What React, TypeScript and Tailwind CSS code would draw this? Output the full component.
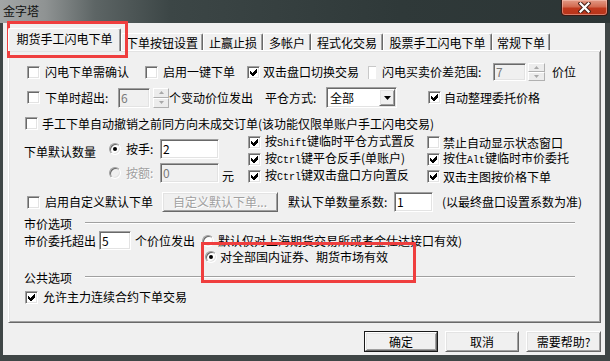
import React from "react";

const T = ({ children, className = "" }: { children: React.ReactNode; className?: string }) => (
  <span className={`whitespace-nowrap text-[12px] leading-[14px] ${className}`}>{children}</span>
);

const M = ({ children }: { children: React.ReactNode }) => (
  <span className="font-['Liberation_Mono',monospace] text-[10px]">{children}</span>
);

const sunken =
  "border border-t-[#a0a0a0] border-l-[#a0a0a0] border-r-white border-b-white shadow-[inset_1px_1px_0_#696969,inset_-1px_-1px_0_#e3e3e3]";
const raised =
  "border border-t-white border-l-white border-r-[#696969] border-b-[#696969] shadow-[inset_1px_1px_0_#e3e3e3,inset_-1px_-1px_0_#a0a0a0]";

const Cb = ({ checked = false }: { checked?: boolean }) => (
  <div className={`relative w-[13px] h-[13px] shrink-0 bg-white ${sunken}`}>
    {checked && (
      <svg className="absolute left-[2px] top-[2px]" width="7" height="7" viewBox="0 0 7 7" shapeRendering="crispEdges">
        <polygon points="0,2 2,4 6,0 7,0 7,3 3,7 2,7 0,5" fill="#000" />
      </svg>
    )}
  </div>
);

const Radio = ({ checked = false, disabled = false }: { checked?: boolean; disabled?: boolean }) => (
  <div
    className={`w-[12px] h-[12px] shrink-0 rounded-full flex items-center justify-center ${sunken} ${
      disabled ? "bg-[#f0f0f0]" : "bg-white"
    }`}
  >
    {checked && <div className="w-[4px] h-[4px] rounded-full bg-black" />}
  </div>
);

const Box = ({
  cls,
  children,
  disabled = false,
}: {
  cls: string;
  children?: React.ReactNode;
  disabled?: boolean;
}) => (
  <div
    className={`flex items-center pl-[2px] shrink-0 ${sunken} ${
      disabled ? "bg-[#f0f0f0] text-[#7a7a7a]" : "bg-white text-black"
    } ${cls}`}
  >
    <span className="text-[12px] leading-[14px]">{children}</span>
  </div>
);

const Spin = ({ cls }: { cls: string }) => (
  <div className={`flex flex-col shrink-0 ${cls}`}>
    <div className="flex-1 flex items-center justify-center bg-[#ececec] border border-t-white border-l-white border-r-[#b0b0b0] border-b-[#b0b0b0]">
      <svg width="5" height="3" viewBox="0 0 5 3">
        <polygon points="2.5,0 5,3 0,3" fill="#a8a8a8" />
      </svg>
    </div>
    <div className="flex-1 flex items-center justify-center bg-[#ececec] border border-t-white border-l-white border-r-[#b0b0b0] border-b-[#b0b0b0]">
      <svg width="5" height="3" viewBox="0 0 5 3">
        <polygon points="0,0 5,0 2.5,3" fill="#a8a8a8" />
      </svg>
    </div>
  </div>
);

const Tab = ({ label, cls, active = false }: { label: string; cls: string; active?: boolean }) => (
  <div
    className={`flex justify-center shrink-0 bg-[#f0f0f0] rounded-t-[2px] border-t border-l border-t-white border-l-white border-r border-r-[#696969] shadow-[inset_-1px_0_0_#a0a0a0] ${
      active ? "relative z-10 h-[23px] -mb-[1px] pt-[3px] items-start" : "h-[17px] items-center pt-[1px]"
    } ${cls}`}
  >
    <T className="text-black">{label}</T>
  </div>
);

const GroupLabel = ({ label, cls }: { label: string; cls: string }) => (
  <div className={`flex items-center h-[14px] pl-[15px] ${cls}`}>
    <T className="text-black">{label}</T>
    <div className="ml-[13px] w-[490px] h-[2px] mb-[3px] border-t border-t-[#a0a0a0] border-b border-b-white" />
  </div>
);

export default function App() {
  return (
    <div className="relative w-[610px] h-[361px] overflow-hidden bg-[#3f4646] font-['Noto_Sans_CJK_SC','Noto_Sans',sans-serif] flex flex-col text-black">
      {/* title bar */}
      <div className="h-[23px] shrink-0 flex items-start bg-[linear-gradient(90deg,#a3a6a6_0px,#8f9393_45px,#5d6565_95px,#3c4646_170px,#2f3939_400px,#2c3535_610px)]">
        <span className="ml-[3px] mt-[4px] text-[12px] leading-[14px] text-[#111]">金字塔</span>
        <div className="ml-auto mr-[2px] w-[47px] h-[16px] rounded-b-[4px] border border-t-0 border-[#3a1a14] bg-[linear-gradient(180deg,#e29a86_0%,#d26a50_45%,#c0391e_55%,#b8341a_100%)] shadow-[inset_0_0_0_1px_rgba(255,210,200,0.45)] flex items-center justify-center">
          <svg width="13" height="11" viewBox="0 0 13 11">
            <path d="M2.5 1.5 L10.5 9.5 M10.5 1.5 L2.5 9.5" stroke="#4a2018" strokeWidth="4.2" strokeLinecap="square" />
            <path d="M2.5 1.5 L10.5 9.5 M10.5 1.5 L2.5 9.5" stroke="#ffffff" strokeWidth="2.2" strokeLinecap="square" />
          </svg>
        </div>
      </div>

      {/* body */}
      <div className="ml-[3px] mr-[5px] h-[332px] bg-[#f0f0f0] flex flex-col pl-[5px] pt-[5px]">
        {/* tabs */}
        <div className="h-[22px] flex items-end">
          <Tab label="期货手工闪电下单" cls="w-[113px]" active />
          <Tab label="下单按钮设置" cls="w-[82px]" />
          <Tab label="止赢止损" cls="w-[60px]" />
          <Tab label="多帐户" cls="w-[48px]" />
          <Tab label="程式化交易" cls="w-[72px]" />
          <Tab label="股票手工闪电下单" cls="w-[109px]" />
          <Tab label="常规下单" cls="w-[58px]" />
        </div>

        {/* panel */}
        <div className={`w-[593px] h-[273px] bg-[#f0f0f0] flex flex-col ${raised}`}>
          {/* row 1 */}
          <div className="mt-[12px] h-[18px] flex items-center">
            <div className="pl-[18px] w-[136px] flex items-center gap-[5px]">
              <Cb />
              <T>闪电下单需确认</T>
            </div>
            <div className="w-[102px] flex items-center gap-[5px]">
              <Cb />
              <T>启用一键下单</T>
            </div>
            <div className="w-[121px] flex items-center gap-[3px]">
              <Cb checked />
              <T>双击盘口切换交易</T>
            </div>
            <div className="w-[8px] h-[13px] shrink-0 bg-white border-t border-l border-t-[#c8c8c8] border-l-[#c8c8c8]" />
            <div className="ml-[6px] w-[111px] flex">
              <T>闪电买卖价差范围:</T>
            </div>
            <Box cls="w-[33px] h-[18px]" disabled>
              7
            </Box>
            <Spin cls="ml-[2px] w-[17px] h-[18px]" />
            <T className="ml-[7px]">价位</T>
          </div>

          {/* row 2 */}
          <div className="mt-[6px] h-[21px] flex items-center">
            <div className="pl-[18px] flex items-center gap-[5px]">
              <Cb />
              <div className="w-[73px] flex">
                <T>下单时超出:</T>
              </div>
            </div>
            <Box cls="w-[32px] h-[20px]" disabled>
              6
            </Box>
            <Spin cls="ml-[3px] w-[16px] h-[20px]" />
            <div className="w-[96px] flex">
              <T>个变动价位发出</T>
            </div>
            <div className="w-[61px] flex">
              <T>平仓方式:</T>
            </div>
            <div className={`w-[71px] h-[21px] shrink-0 bg-white flex items-center ${sunken}`}>
              <T className="pl-[3px]">全部</T>
              <div className={`ml-auto mr-[1px] w-[16px] h-[17px] bg-[#f0f0f0] flex items-center justify-center ${raised}`}>
                <svg width="7" height="4" viewBox="0 0 7 4">
                  <polygon points="0,0 7,0 3.5,4" fill="#000" />
                </svg>
              </div>
            </div>
            <div className="ml-[31px] flex items-center gap-[3px]">
              <Cb checked />
              <T>自动整理委托价格</T>
            </div>
          </div>

          {/* row 3 */}
          <div className="mt-[9px] h-[13px] flex items-center pl-[16px] gap-[4px]">
            <Cb />
            <T>手工下单自动撤销之前同方向未成交订单(该功能仅限单账户手工闪电交易)</T>
          </div>

          {/* block */}
          <div className="mt-[4px] h-[51px] flex">
            <div className="w-[239px] pl-[15px] flex">
              <div className="w-[85px] pt-[4px]">
                <T>下单默认数量</T>
              </div>
              <div className="flex flex-col">
                <div className="mt-[5px] h-[20px] flex items-center">
                  <Radio checked />
                  <div className="ml-[5px] w-[34px] flex">
                    <T>按手:</T>
                  </div>
                  <Box cls="w-[59px] h-[20px]">2</Box>
                </div>
                <div className="mt-[4px] h-[20px] flex items-center">
                  <Radio disabled />
                  <div className="ml-[5px] w-[34px] flex">
                    <T className="text-[#a0a0a0] [text-shadow:1px_1px_0_#fff]">按额:</T>
                  </div>
                  <Box cls="w-[59px] h-[20px]" disabled>
                    0
                  </Box>
                  <T className="ml-[3px] mt-[6px]">元</T>
                </div>
              </div>
            </div>
            <div className="grid grid-cols-[179px_auto] grid-rows-[17px_17px_17px]">
              <div className="flex items-center gap-[4px]">
                <Cb checked />
                <T>
                  按<M>Shift</M>键临时平仓方式置反
                </T>
              </div>
              <div className="flex items-center gap-[3px]">
                <Cb />
                <T>禁止自动显示状态窗口</T>
              </div>
              <div className="flex items-center gap-[4px]">
                <Cb checked />
                <T>
                  按<M>Ctrl</M>键平仓反手(单账户)
                </T>
              </div>
              <div className="flex items-center gap-[3px]">
                <Cb checked />
                <T>
                  按住<M>Alt</M>键临时市价委托
                </T>
              </div>
              <div className="flex items-center gap-[4px]">
                <Cb checked />
                <T>
                  按<M>Ctrl</M>键双击盘口方向置反
                </T>
              </div>
              <div className="flex items-center gap-[3px]">
                <Cb checked />
                <T>双击主图按价格下单</T>
              </div>
            </div>
          </div>

          {/* row 7 */}
          <div className="mt-[7px] h-[20px] flex items-center">
            <div className="pl-[18px] flex items-center gap-[5px]">
              <Cb />
              <div className="w-[117px] flex">
                <T>启用自定义默认下单</T>
              </div>
            </div>
            <div className={`w-[116px] h-[20px] shrink-0 bg-[#f0f0f0] flex items-center justify-center ${raised}`}>
              <T className="text-[#a0a0a0] [text-shadow:1px_1px_0_#fff]">自定义默认下单...</T>
            </div>
            <div className="ml-[10px] w-[106px] flex">
              <T>默认下单数量系数:</T>
            </div>
            <Box cls="w-[39px] h-[20px]">1</Box>
            <T className="ml-[9px]">(以最终盘口设置系数为准)</T>
          </div>

          <GroupLabel label="市价选项" cls="mt-[5px]" />

          {/* row 8 */}
          <div className="h-[19px] flex items-center pl-[15px]">
            <div className="w-[75px] flex">
              <T>市价委托超出</T>
            </div>
            <Box cls="w-[32px] h-[19px]">5</Box>
            <div className="ml-[4px] w-[67px] flex">
              <T>个价位发出</T>
            </div>
            <Radio />
            <T className="ml-[4px]">默认仅对上海期货交易所或者金仕达接口有效)</T>
          </div>

          {/* row 9 */}
          <div className="h-[14px] flex items-center pl-[196px]">
            <Radio checked />
            <T className="ml-[3px]">对全部国内证券、期货市场有效</T>
          </div>

          <GroupLabel label="公共选项" cls="mt-[7px]" />

          {/* row 10 */}
          <div className="mt-[5px] h-[14px] flex items-center pl-[16px] gap-[5px]">
            <Cb checked />
            <T>允许主力连续合约下单交易</T>
          </div>
        </div>

        {/* buttons */}
        <div className="mt-[8px] w-[593px] flex justify-end gap-[7px]">
          <div className="w-[74px] h-[21px] border border-[#1a1a1a] flex">
            <div className={`flex-1 bg-[#f0f0f0] flex items-center justify-center ${raised}`}>
              <T>确定</T>
            </div>
          </div>
          <div className={`w-[74px] h-[21px] bg-[#f0f0f0] flex items-center justify-center ${raised}`}>
            <T>取消</T>
          </div>
          <div className={`w-[75px] h-[21px] bg-[#f0f0f0] flex items-center justify-center ${raised}`}>
            <T>需要帮助?</T>
          </div>
        </div>
      </div>

      {/* annotation boxes */}
      <div className="absolute left-[7px] top-[21px] w-[121px] h-[37px] border-[3px] border-[#ef3e3e] pointer-events-none" />
      <div className="absolute left-[201px] top-[242px] w-[215px] h-[41px] border-[3px] border-[#ef3e3e] pointer-events-none" />
    </div>
  );
}
